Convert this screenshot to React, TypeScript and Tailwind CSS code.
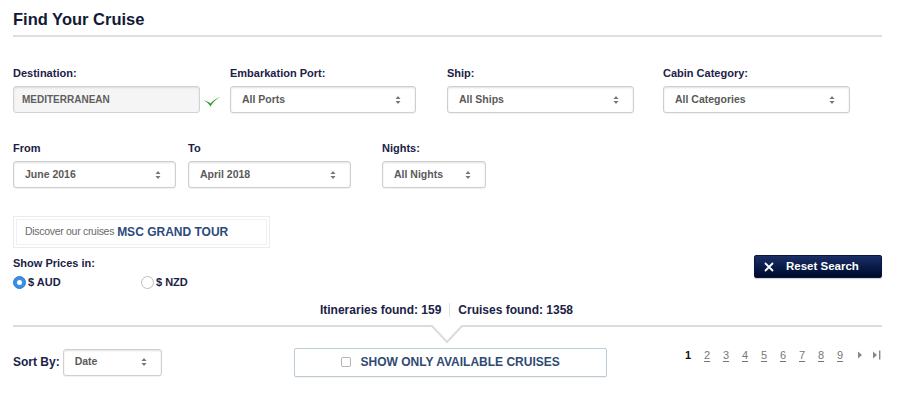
import { useState } from 'react'

const font = { fontFamily: '"Liberation Sans", Arial, sans-serif' }

function Arrows() {
    return (
        <svg width="6" height="10" viewBox="0 0 6 10" className="shrink-0">
            <path d="M3 1 L5.5 4 H0.5 Z" fill="#777" />
            <path d="M3 9 L5.5 6 H0.5 Z" fill="#777" />
        </svg>
    )
}

function FakeSelect({ value, width }: { value: string; width: string }) {
    return (
        <div
            className={`${width} h-[27px] flex items-center justify-between pl-[11px] pr-[14px] bg-white border border-[#cfcfcf] rounded-[3px] shadow-[inset_0_1px_2px_rgba(0,0,0,0.12),0_1px_1px_rgba(0,0,0,0.06)]`}
        >
            <span className="text-[10.5px] font-bold text-[#5a5a5a]">{value}</span>
            <Arrows />
        </div>
    )
}

function Field({ label, children, className = '' }: { label: string; children: React.ReactNode; className?: string }) {
    return (
        <div className={`flex flex-col ${className}`}>
            <label className="text-[11px] font-bold text-[#1b2246] leading-[14px] mb-[6px]">{label}</label>
            {children}
        </div>
    )
}

export default function App() {
    const [currency, setCurrency] = useState('AUD')
    const [onlyAvailable, setOnlyAvailable] = useState(false)
    const pages = ['2', '3', '4', '5', '6', '7', '8', '9']

    return (
        <div className="w-[900px] h-[397px] bg-white overflow-hidden" style={font}>
            <div className="pl-[13px] pr-[18px]">
                {/* Header */}
                <h1 className="pt-[9px] text-[16.5px] leading-[20px] font-bold text-[#141a36]">Find Your Cruise</h1>
                <div className="mt-[6px] h-[2px] bg-[#dedede]" />

                {/* Row 1 */}
                <div className="flex mt-[29px]">
                    <Field label="Destination:" className="w-[217px]">
                        <div className="flex items-center">
                            <div className="w-[187px] h-[27px] flex items-center pl-[8px] bg-[#f5f5f5] border border-[#d2d2d2] rounded-[3px] shadow-[inset_0_1px_2px_rgba(0,0,0,0.1)]">
                                <span className="text-[10px] font-bold text-[#5f5f5f]">MEDITERRANEAN</span>
                            </div>
                            <svg width="18" height="12" viewBox="0 0 18 12" className="ml-[3px] mt-[5px]">
                                <path d="M0.5 4.5 C3 5.2 5.5 7 7.5 10.5 C10 6 13.5 2.8 17.5 1 C13.5 2 10.5 4.2 7.5 7.5 C5.5 5.8 3 4.8 0.5 4.5 Z" fill="#2f9a26" />
                            </svg>
                        </div>
                    </Field>
                    <Field label="Embarkation Port:" className="w-[217px]">
                        <FakeSelect value="All Ports" width="w-[186px]" />
                    </Field>
                    <Field label="Ship:" className="w-[216px]">
                        <FakeSelect value="All Ships" width="w-[187px]" />
                    </Field>
                    <Field label="Cabin Category:">
                        <FakeSelect value="All Categories" width="w-[187px]" />
                    </Field>
                </div>

                {/* Row 2 */}
                <div className="flex mt-[28px]">
                    <Field label="From" className="w-[175px]">
                        <FakeSelect value="June 2016" width="w-[163px]" />
                    </Field>
                    <Field label="To" className="w-[194px]">
                        <FakeSelect value="April 2018" width="w-[163px]" />
                    </Field>
                    <Field label="Nights:">
                        <FakeSelect value="All Nights" width="w-[104px]" />
                    </Field>
                </div>

                {/* Grand tour */}
                <div className="mt-[28px] w-[257px] h-[32px] border border-[#ececec] p-[2px]">
                    <div className="h-full border border-[#f0f0f0] flex items-center pl-[8px]">
                        <span className="text-[10.5px] text-[#6a6a6a] tracking-[-0.3px]">Discover our cruises</span>
                        <span className="ml-[3px] text-[12px] font-bold text-[#2c4a7c]">MSC GRAND TOUR</span>
                    </div>
                </div>

                {/* Prices + reset */}
                <div className="flex justify-between items-start mt-[8px]">
                    <div>
                        <div className="text-[11px] font-bold text-[#1b2246] leading-[14px]">Show Prices in:</div>
                        <div className="flex mt-[4px]">
                            <button onClick={() => setCurrency('AUD')} className="flex items-center w-[128px]">
                                <span
                                    className={`w-[13px] h-[13px] rounded-full flex items-center justify-center ${currency === 'AUD' ? 'bg-[#3d8fe3] border border-[#2f7fd0]' : 'bg-white border border-[#bdbdbd]'}`}
                                >
                                    {currency === 'AUD' && <span className="w-[5px] h-[5px] rounded-full bg-white" />}
                                </span>
                                <span className="ml-[2px] text-[11px] font-bold text-[#1b2246]">$ AUD</span>
                            </button>
                            <button onClick={() => setCurrency('NZD')} className="flex items-center">
                                <span
                                    className={`w-[13px] h-[13px] rounded-full flex items-center justify-center ${currency === 'NZD' ? 'bg-[#3d8fe3] border border-[#2f7fd0]' : 'bg-white border border-[#bdbdbd]'}`}
                                >
                                    {currency === 'NZD' && <span className="w-[5px] h-[5px] rounded-full bg-white" />}
                                </span>
                                <span className="ml-[2px] text-[11px] font-bold text-[#1b2246]">$ NZD</span>
                            </button>
                        </div>
                    </div>
                    <button className="w-[128px] h-[23px] mt-[-1px] flex items-center pl-[9px] rounded-[2px] bg-gradient-to-b from-[#1b2f66] to-[#000a2e] border border-[#0b1640] shadow-[0_1px_1px_rgba(0,0,0,0.2)]">
                        <svg width="10" height="10" viewBox="0 0 10 10">
                            <path d="M1 1 L9 9 M9 1 L1 9" stroke="#fff" strokeWidth="1.8" />
                        </svg>
                        <span className="ml-[12px] text-[11.5px] font-bold text-white">Reset Search</span>
                    </button>
                </div>

                {/* Found counts */}
                <div className="flex justify-center items-center mt-[12px] text-[12px] font-bold text-[#1b2246] leading-[14px]">
                    <span className="ml-[-2px]">Itineraries found: 159</span>
                    <span className="mx-[8px] w-px h-[14px] bg-[#e2e2e2]" />
                    <span>Cruises found: 1358</span>
                </div>

                {/* Divider with notch */}
                <svg width="869" height="20" viewBox="0 0 869 20" className="block mt-[7px]">
                    <polyline points="0,2 419,2 434,18 449,2 869,2" fill="none" stroke="#dcdcdc" strokeWidth="2" />
                </svg>

                {/* Sort / filter / pagination */}
                <div className="flex items-center mt-[4px] relative">
                    <span className="text-[12px] font-bold text-[#1b2246]">Sort By:</span>
                    <div className="ml-[3px]">
                        <FakeSelect value="Date" width="w-[99px]" />
                    </div>
                    <button
                        onClick={() => setOnlyAvailable(!onlyAvailable)}
                        className="ml-[132px] w-[313px] h-[29px] flex items-center justify-center border border-[#bccbd4] rounded-[2px] bg-white shadow-[0_1px_1px_rgba(0,0,0,0.06)]"
                    >
                        <span className="w-[10px] h-[10px] border border-[#b5b5b5] rounded-[2px] bg-white flex items-center justify-center">
                            {onlyAvailable && <span className="w-[6px] h-[6px] bg-[#2c4a7c]" />}
                        </span>
                        <span className="ml-[10px] text-[12px] font-bold text-[#2f4a73]">SHOW ONLY AVAILABLE CRUISES</span>
                    </button>
                    <div className="ml-auto flex items-center text-[11px] mt-[-14px]">
                        <span className="font-bold text-[#111] w-[19px]">1</span>
                        {pages.map((p) => (
                            <a key={p} className="w-[19px] text-[#777] underline underline-offset-2 cursor-pointer">
                                {p}
                            </a>
                        ))}
                        <svg width="6" height="8" viewBox="0 0 6 8" className="ml-[1px]">
                            <path d="M1 0.5 L5 4 L1 7.5 Z" fill="#888" />
                        </svg>
                        <svg width="10" height="10" viewBox="0 0 10 10" className="ml-[9px]">
                            <path d="M1 1.5 L5 5 L1 8.5 Z" fill="#888" />
                            <rect x="7" y="0.5" width="1.4" height="9" fill="#888" />
                        </svg>
                    </div>
                </div>
            </div>
        </div>
    )
}
